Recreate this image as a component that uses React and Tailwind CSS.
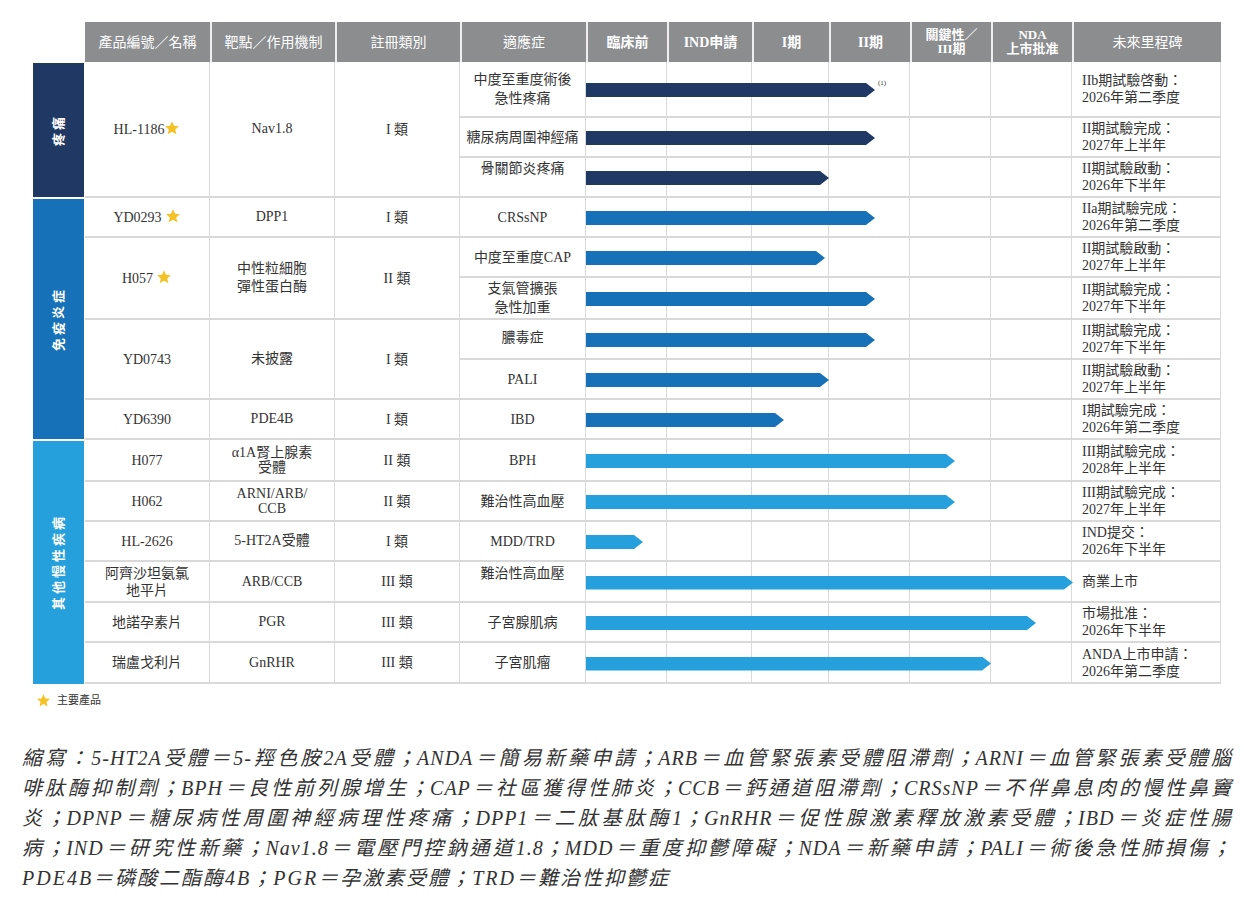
import React from 'react';

const LINE = 'border-[#d9d9d9]';

const headers = [
  { t: ['產品編號／名稱'] },
  { t: ['靶點／作用機制'] },
  { t: ['註冊類別'] },
  { t: ['適應症'] },
  { t: ['臨床前'], bold: true },
  { t: ['IND申請'], bold: true },
  { t: ['I期'], bold: true },
  { t: ['II期'], bold: true },
  { t: ['關鍵性／', 'III期'], bold: true, small: true },
  { t: ['NDA', '上市批准'], bold: true, small: true },
  { t: ['未來里程碑'] },
];

const groups = [
  {
    name: '疼痛',
    cat: 'mt-px h-[134px] bg-[#1f3864]',
    bar: 'bg-[#1f3864]',
    products: [
      {
        name: ['HL-1186'], star: true, target: ['Nav1.8'], cls: 'I 類',
        rows: [
          { h: 'h-[56px]', ind: ['中度至重度術後', '急性疼痛'], end: 875, note: true, ms: ['IIb期試驗啓動：', '2026年第二季度'] },
          { h: 'h-[40px]', ind: ['糖尿病周圍神經痛'], end: 875, ms: ['II期試驗完成：', '2027年上半年'] },
          { h: 'h-[40px]', ind: ['骨關節炎疼痛'], pad: 'pb-[18px]', end: 829, ms: ['II期試驗啟動：', '2026年下半年'] },
        ],
      },
    ],
  },
  {
    name: '免疫炎症',
    cat: 'mt-[2px] h-[240px] bg-[#1771b8]',
    bar: 'bg-[#1771b8]',
    products: [
      {
        name: ['YD0293'], star: true, gap: true, target: ['DPP1'], cls: 'I 類',
        rows: [
          { h: 'h-[40px]', ind: ['CRSsNP'], end: 875, ms: ['IIa期試驗完成：', '2026年第二季度'] },
        ],
      },
      {
        name: ['H057'], star: true, gap: true, target: ['中性粒細胞', '彈性蛋白酶'], cls: 'II 類',
        rows: [
          { h: 'h-[40px]', ind: ['中度至重度CAP'], end: 825, ms: ['II期試驗啟動：', '2027年上半年'] },
          { h: 'h-[42px]', ind: ['支氣管擴張', '急性加重'], end: 875, ms: ['II期試驗完成：', '2027年下半年'] },
        ],
      },
      {
        name: ['YD0743'], target: ['未披露'], cls: 'I 類',
        rows: [
          { h: 'h-[40px]', ind: ['膿毒症'], pad: 'pb-[4px]', end: 875, ms: ['II期試驗完成：', '2027年下半年'] },
          { h: 'h-[40px]', ind: ['PALI'], end: 829, ms: ['II期試驗啟動：', '2027年上半年'] },
        ],
      },
      {
        name: ['YD6390'], target: ['PDE4B'], cls: 'I 類',
        rows: [
          { h: 'h-[40px]', ind: ['IBD'], end: 784, ms: ['I期試驗完成：', '2026年第二季度'] },
        ],
      },
    ],
  },
  {
    name: '其他慢性疾病',
    cat: 'mt-[2px] h-[243px] bg-[#26a0dc]',
    bar: 'bg-[#26a0dc]',
    products: [
      {
        name: ['H077'], target: ['α1A腎上腺素', '受體'], tight: true, cls: 'II 類',
        rows: [
          { h: 'h-[42px]', ind: ['BPH'], end: 955, ms: ['III期試驗完成：', '2028年上半年'] },
        ],
      },
      {
        name: ['H062'], target: ['ARNI/ARB/', 'CCB'], tight: true, cls: 'II 類',
        rows: [
          { h: 'h-[40px]', ind: ['難治性高血壓'], end: 955, ms: ['III期試驗完成：', '2027年上半年'] },
        ],
      },
      {
        name: ['HL-2626'], target: ['5-HT2A受體'], cls: 'I 類',
        rows: [
          { h: 'h-[40px]', ind: ['MDD/TRD'], end: 643, ms: ['IND提交：', '2026年下半年'] },
        ],
      },
      {
        name: ['阿齊沙坦氨氯', '地平片'], target: ['ARB/CCB'], cls: 'III 類',
        rows: [
          { h: 'h-[41px]', ind: ['難治性高血壓'], pad: 'pb-[16px]', end: 1073, ms: ['商業上市'] },
        ],
      },
      {
        name: ['地諾孕素片'], target: ['PGR'], cls: 'III 類',
        rows: [
          { h: 'h-[40px]', ind: ['子宮腺肌病'], end: 1036, ms: ['市場批准：', '2026年下半年'] },
        ],
      },
      {
        name: ['瑞盧戈利片'], target: ['GnRHR'], cls: 'III 類',
        rows: [
          { h: 'h-[41px]', ind: ['子宮肌瘤'], end: 991, ms: ['ANDA上市申請：', '2026年第二季度'] },
        ],
      },
    ],
  },
];

const footnote = [
  '縮寫：5-HT2A受體＝5-羥色胺2A受體；ANDA＝簡易新藥申請；ARB＝血管緊張素受體阻滯劑；ARNI＝血管緊張素受體腦',
  '啡肽酶抑制劑；BPH＝良性前列腺增生；CAP＝社區獲得性肺炎；CCB＝鈣通道阻滯劑；CRSsNP＝不伴鼻息肉的慢性鼻竇',
  '炎；DPNP＝糖尿病性周圍神經病理性疼痛；DPP1＝二肽基肽酶1；GnRHR＝促性腺激素釋放激素受體；IBD＝炎症性腸',
  '病；IND＝研究性新藥；Nav1.8＝電壓門控鈉通道1.8；MDD＝重度抑鬱障礙；NDA＝新藥申請；PALI＝術後急性肺損傷；',
];

const Star = ({ className }) => (
  <svg viewBox="0 0 24 24" className={className}>
    <path d="M12 1.8l3 6.8 7.4.7-5.6 4.9 1.7 7.3L12 17.7l-6.5 3.8 1.7-7.3-5.6-4.9 7.4-.7z" fill="#f5c226" />
  </svg>
);

const Lines = ({ items }) => items.map((t, i) => <div key={i}>{t}</div>);

const Row = ({ row, bar }) => (
  <div className={`flex ${row.h} border-b-2 ${LINE}`}>
    <div className={`flex w-[126px] shrink-0 flex-col items-center justify-center border-r ${LINE} text-center leading-[19px] ${row.pad || ''}`}>
      <Lines items={row.ind} />
    </div>
    <div className="relative grid w-[486px] shrink-0 grid-cols-[81px_85px_77px_81px_81px_81px]">
      <div className={`border-r ${LINE}`} />
      <div className={`border-r ${LINE}`} />
      <div className={`border-r ${LINE}`} />
      <div className={`border-r ${LINE}`} />
      <div className={`border-r ${LINE}`} />
      <div className={`border-r ${LINE}`} />
      <div
        className={`absolute left-0 top-[calc(50%+1px)] h-[14px] -translate-y-1/2 ${bar} [clip-path:polygon(0_0,calc(100%_-_9px)_0,100%_50%,calc(100%_-_9px)_100%,0_100%)]`}
        style={{ width: row.end - 586 }}
      />
      {row.note && (
        <span className="absolute top-[18px] text-[7px] leading-none text-[#333]" style={{ left: row.end - 586 + 3 }}>
          (1)
        </span>
      )}
    </div>
    <div className={`flex w-[149px] shrink-0 flex-col justify-center border-r ${LINE} pl-[10px] leading-[17px]`}>
      <Lines items={row.ms} />
    </div>
  </div>
);

const Product = ({ p, bar }) => (
  <div className="flex">
    <div className={`flex w-[125px] shrink-0 items-center justify-center border-r border-b-2 ${LINE} text-center leading-[17px]`}>
      <div>
        <Lines items={p.name} />
      </div>
      {p.star && <Star className={`${p.gap ? 'ml-[3px]' : ''} h-[16px] w-[16px] -translate-y-px`} />}
    </div>
    <div className={`flex w-[125px] shrink-0 flex-col items-center justify-center border-r border-b-2 ${LINE} text-center ${p.tight ? 'leading-[15px]' : 'leading-[18px]'}`}>
      <Lines items={p.target} />
    </div>
    <div className={`flex w-[125px] shrink-0 items-center justify-center border-r border-b-2 ${LINE}`}>{p.cls}</div>
    <div className="flex flex-col">
      {p.rows.map((r, i) => (
        <Row key={i} row={r} bar={bar} />
      ))}
    </div>
  </div>
);

export default function App() {
  return (
    <div className="h-[912px] w-[1244px] overflow-hidden bg-white font-['Liberation_Serif','Noto_Sans_CJK_TC',serif] text-[14px] text-[#333]">
      <div className="flex pl-[33px] pt-[22px]">
        <div className="flex w-[51px] shrink-0 flex-col">
          <div className="h-[40px]" />
          {groups.map((g) => (
            <div key={g.name} className={`flex items-center justify-center ${g.cat}`}>
              <span className="rotate-180 text-[13px] font-bold tracking-[3px] text-white [text-orientation:sideways] [writing-mode:vertical-rl]">
                {g.name}
              </span>
            </div>
          ))}
        </div>
        <div className="ml-px w-[1136px]">
          <div className="grid h-[40px] grid-cols-[125px_125px_125px_126px_81px_85px_77px_81px_81px_81px_149px] bg-[#8b8d8f] text-white">
            {headers.map((h, i) => (
              <div
                key={i}
                className={`flex flex-col items-center justify-center text-center ${i > 0 ? 'border-l-2 border-[#eeeeee]' : ''} ${h.bold ? 'font-bold' : ''} ${h.small ? 'text-[13px] leading-[14px]' : 'text-[14px]'}`}
              >
                <Lines items={h.t} />
              </div>
            ))}
          </div>
          {groups.map((g) => (
            <div key={g.name}>
              {g.products.map((p, i) => (
                <Product key={i} p={p} bar={g.bar} />
              ))}
            </div>
          ))}
        </div>
      </div>

      <div className="mt-[8px] ml-[36px] flex items-center gap-[6px] text-[11px]">
        <Star className="h-[15px] w-[15px]" />
        <span>主要產品</span>
      </div>

      <div className="mt-[34px] ml-[22px] w-[1210px] text-[20px] leading-[30px] italic text-[#333]">
        {footnote.map((t, i) => (
          <div key={i} className="whitespace-nowrap tracking-[1px] [text-align-last:justify]">
            {t}
          </div>
        ))}
        <div className="whitespace-nowrap tracking-[2px]">PDE4B＝磷酸二酯酶4B；PGR＝孕激素受體；TRD＝難治性抑鬱症</div>
      </div>
    </div>
  );
}
